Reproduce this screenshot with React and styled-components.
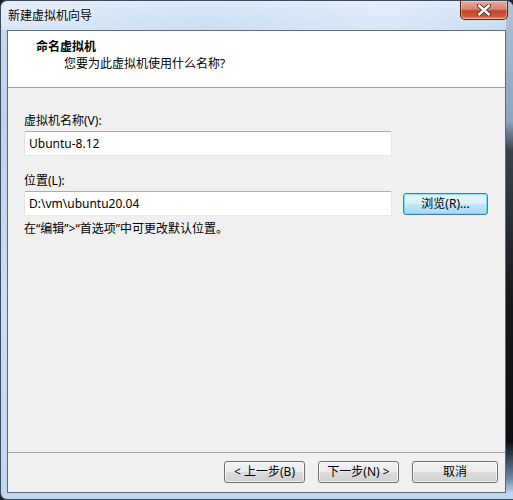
import React from "react";
import styled, { createGlobalStyle } from "styled-components";

const Global = createGlobalStyle`
  html, body { margin: 0; padding: 0; background: #1b2026; }
  body { font-family: "Segoe UI", "Noto Sans", "Noto Sans CJK SC", sans-serif; font-size: 12px; color: #000; }
  * { box-sizing: border-box; }
`;

const Window = styled.div`
  width: 513px;
  height: 500px;
  display: flex;
  flex-direction: column;
  border-radius: 7px 7px 0 7px;
  border: 1px solid #3c4a5a;
  border-right: none;
  background:
    linear-gradient(to bottom, #a9bfd6 0px, #8ea6bd 120px, #39414a 150px, #15191d 300px, #0b0e11 440px, #6f8aa6 478px, #bcd6ef 492px) right top / 7px 100% no-repeat,
    linear-gradient(to bottom, #d6e6f6 0px, #c3d9f0 30px, #b9d3ee 120px, #c8def4 300px, #bed7f1 500px);
  overflow: hidden;
`;

const TitleBar = styled.div`
  height: 29px;
  flex: none;
  display: flex;
  align-items: flex-start;
  justify-content: space-between;
  padding-left: 7px;
  background: linear-gradient(to right, rgba(255,255,255,0.35), rgba(255,255,255,0.1) 40%, rgba(255,255,255,0.35) 75%, rgba(255,255,255,0.05));
`;

const Title = styled.div`
  margin-top: 7px;
  font-size: 12px;
  line-height: 16px;
  color: #000;
  text-shadow: 0 0 6px rgba(255,255,255,0.9);
`;

const CloseBtn = styled.div`
  width: 48px;
  height: 19px;
  margin-right: 5px;
  border: 1px solid #5a2016;
  border-top: none;
  border-radius: 0 0 5px 5px;
  background: linear-gradient(to bottom, #e9a99b 0%, #d88571 45%, #c2412a 55%, #cf5a3c 85%, #e48a64 100%);
  box-shadow: inset 0 0 0 1px rgba(255,255,255,0.35);
  display: flex;
  align-items: center;
  justify-content: center;
`;

const Client = styled.div`
  flex: 1;
  margin: 0 7px 6px 6px;
  border: 1px solid #5d6b7a;
  background: #f0f0f0;
  display: flex;
  flex-direction: column;
`;

const Header = styled.div`
  height: 57px;
  flex: none;
  background: #fff;
  border-bottom: 1px solid #a0a0a0;
  padding: 8px 0 0 28px;
`;

const HeaderTitle = styled.div`
  font-weight: bold;
  line-height: 16px;
  font-size: 12px;
`;

const HeaderSub = styled.div`
  margin-top: 1px;
  padding-left: 28px;
  line-height: 16px;
`;

const Body = styled.div`
  flex: 1;
  padding: 25px 0 0 16px;
  display: flex;
  flex-direction: column;
`;

const Label = styled.div`
  line-height: 16px;
  margin-top: ${(p) => p.$top || 0}px;
`;

const Row = styled.div`
  display: flex;
  align-items: center;
  margin-top: 2px;
  gap: 11px;
`;

const Input = styled.div`
  width: 368px;
  height: 25px;
  background: #fff;
  border: 1px solid #e3e9ef;
  border-top-color: #abadb3;
  border-left-color: #e2e3ea;
  border-radius: 2px;
  padding-left: 4px;
  display: flex;
  align-items: center;
  line-height: 16px;
`;

const Button = styled.div`
  width: ${(p) => p.$w}px;
  height: 22px;
  border: 1px solid ${(p) => (p.$focus ? "#3c7fb1" : "#707070")};
  border-radius: 3px;
  background: ${(p) =>
    p.$focus
      ? "linear-gradient(to bottom, #eaf6fd 0%, #d9f0fc 50%, #bee6fd 51%, #a7d9f5 100%)"
      : "linear-gradient(to bottom, #f2f2f2 0%, #ebebeb 50%, #dddddd 51%, #cfcfcf 100%)"};
  box-shadow: inset 0 0 0 1px ${(p) => (p.$focus ? "rgba(72,216,251,0.6)" : "rgba(255,255,255,0.7)")};
  display: flex;
  align-items: center;
  justify-content: center;
  line-height: 16px;
  white-space: nowrap;
`;

const Note = styled.div`
  margin-top: 5px;
  line-height: 16px;
`;

const Footer = styled.div`
  height: 40px;
  flex: none;
  border-top: 1px solid #a0a0a0;
  display: flex;
  justify-content: flex-end;
  align-items: flex-start;
  padding: 8px 7px 0 0;
  gap: 13px;
`;

export default function App() {
  return (
    <>
      <Global />
      <Window>
        <TitleBar>
          <Title>新建虚拟机向导</Title>
          <CloseBtn>
            <svg width="16" height="12" viewBox="0 0 16 12">
              <path d="M3 1.5 L13 10.5 M13 1.5 L3 10.5" stroke="#4a2a24" strokeWidth="4.2" strokeLinecap="round" fill="none" />
              <path d="M3 1.5 L13 10.5 M13 1.5 L3 10.5" stroke="#ffffff" strokeWidth="2.4" strokeLinecap="round" fill="none" />
            </svg>
          </CloseBtn>
        </TitleBar>
        <Client>
          <Header>
            <HeaderTitle>命名虚拟机</HeaderTitle>
            <HeaderSub>您要为此虚拟机使用什么名称?</HeaderSub>
          </Header>
          <Body>
            <Label>虚拟机名称(V):</Label>
            <Row>
              <Input>Ubuntu-8.12</Input>
            </Row>
            <Label $top={17}>位置(L):</Label>
            <Row>
              <Input>D:\vm\ubuntu20.04</Input>
              <Button $w={85} $focus>浏览(R)...</Button>
            </Row>
            <Note>在“编辑”&gt;“首选项”中可更改默认位置。</Note>
          </Body>
          <Footer>
            <Button $w={81}>&lt; 上一步(B)</Button>
            <Button $w={81}>下一步(N) &gt;</Button>
            <Button $w={86}>取消</Button>
          </Footer>
        </Client>
      </Window>
    </>
  );
}
